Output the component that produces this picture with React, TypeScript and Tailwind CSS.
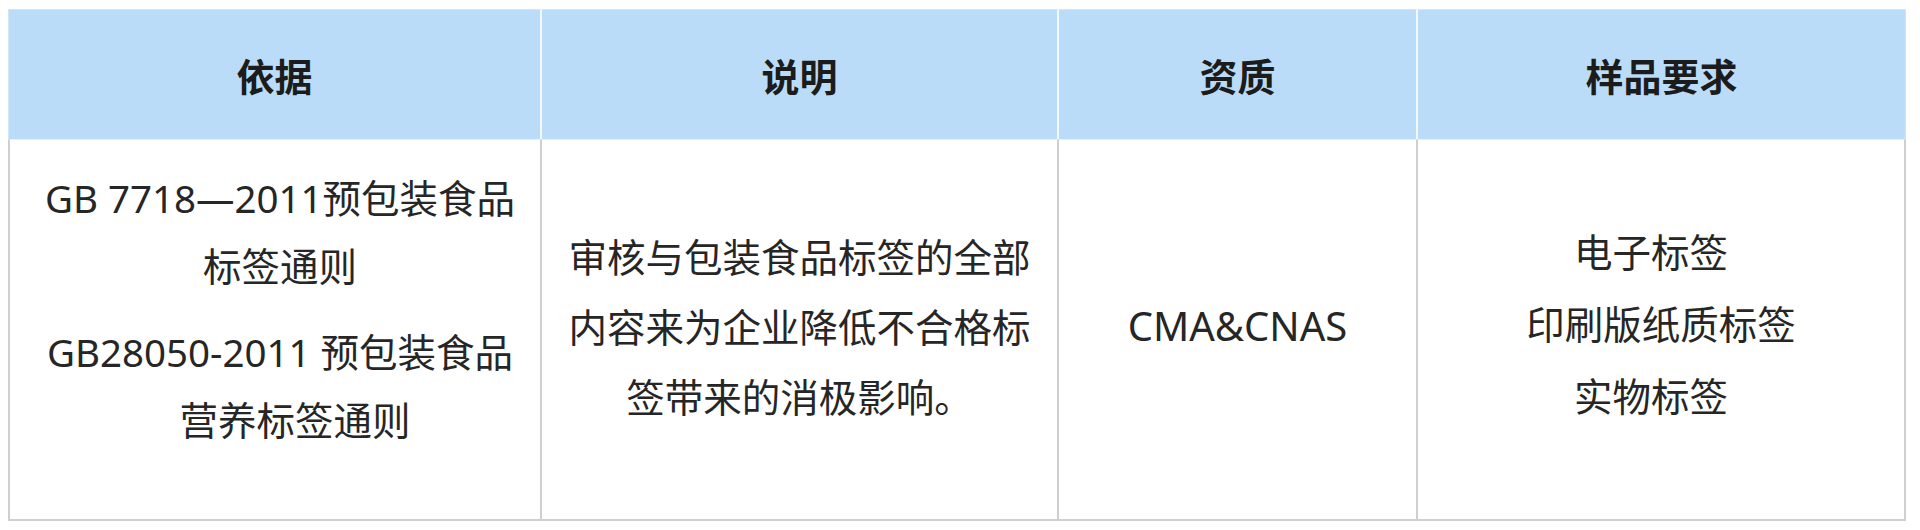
const headers = ["依据", "说明", "资质", "样品要求"];

const font = { fontFamily: '"Noto Sans", "Noto Sans CJK SC", sans-serif' };

export default function App() {
  return (
    <div className="min-h-[530px] w-[1920px] bg-white pl-[8px] pt-[9px]" style={font}>
      <div className="grid w-[1898px] grid-cols-[534px_517px_359px_488px]">
        {/* 表头 */}
        {headers.map((h, i) => (
          <div
            key={h}
            className={`flex h-[130px] items-center justify-center border-t border-[#d3e6f6] bg-[#badcf8] text-[38px] font-bold text-[#1c1c1c] ${
              i === 0 ? "border-l border-l-[#d3e6f6]" : ""
            } ${i === 3 ? "border-r border-r-[#d3e6f6]" : "border-r-2 border-r-[#f4f9fe]"}`}
            style={{ fontFamily: '"Noto Sans CJK SC", sans-serif' }}
          >
            {h}
          </div>
        ))}

        {/* 依据 */}
        <div className="flex h-[382px] flex-col items-center justify-center gap-[18px] border-x-2 border-b-2 border-t border-[#cfcfcf] border-t-[#e6f1fb] pb-[42px] pl-[10px] text-[38.5px] leading-[68px] text-[#262626]">
          <div className="flex flex-col items-center whitespace-nowrap">
            <span>GB 7718—2011预包装食品</span>
            <span>标签通则</span>
          </div>
          <div className="flex flex-col items-center whitespace-nowrap">
            <span>GB28050-2011 预包装食品</span>
            <span className="pl-[30px]">营养标签通则</span>
          </div>
        </div>

        {/* 说明 */}
        <div className="flex h-[382px] flex-col items-center justify-center border-b-2 border-r-2 border-t border-[#cfcfcf] border-t-[#e6f1fb] pb-[6px] text-[38.5px] leading-[70px] text-[#262626] whitespace-nowrap">
          <span>审核与包装食品标签的全部</span>
          <span>内容来为企业降低不合格标</span>
          <span>签带来的消极影响。</span>
        </div>

        {/* 资质 */}
        <div className="flex h-[382px] items-center justify-center border-b-2 border-r-2 border-t border-[#cfcfcf] border-t-[#e6f1fb] pb-[8px] text-[40px] text-[#262626]">
          CMA&amp;CNAS
        </div>

        {/* 样品要求 */}
        <div className="flex h-[382px] flex-col items-center justify-center border-b-2 border-r-2 border-t border-[#cfcfcf] border-t-[#e6f1fb] pb-[12px] text-[38.5px] leading-[72px] text-[#262626] whitespace-nowrap">
          <span className="pr-[20px]">电子标签</span>
          <span>印刷版纸质标签</span>
          <span className="pr-[20px]">实物标签</span>
        </div>
      </div>
    </div>
  );
}
